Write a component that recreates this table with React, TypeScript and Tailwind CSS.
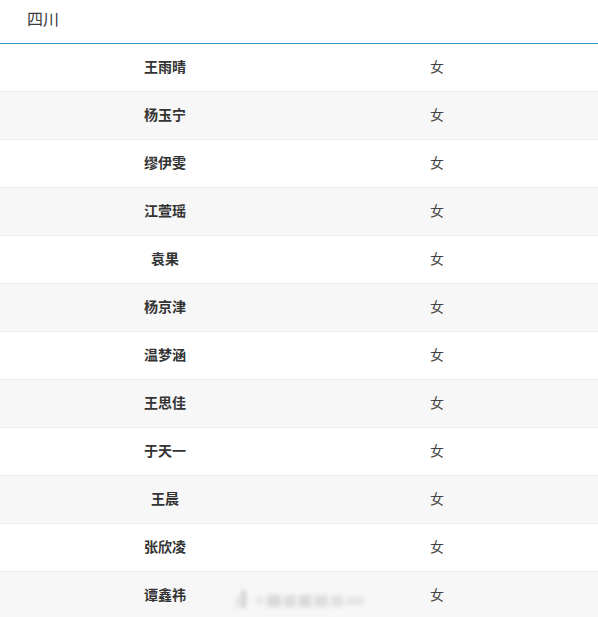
const NAMES = [
  "王雨晴",
  "杨玉宁",
  "缪伊雯",
  "江萱瑶",
  "袁果",
  "杨京津",
  "温梦涵",
  "王思佳",
  "于天一",
  "王晨",
  "张欣凌",
  "谭鑫祎",
];

export default function App() {
  return (
    <div
      className="relative w-[598px] h-[617px] overflow-hidden bg-white text-[#333]"
      style={{ fontFamily: '"Microsoft YaHei", "Noto Sans CJK SC", sans-serif' }}
    >
      <div className="h-[43px] pl-[27px] pt-[6px]">
        <span className="text-[16px] leading-[22px] text-[#3a3a3a]">四川</span>
      </div>
      <div className="h-[1px] w-full bg-[#34a0cc]" />
      {NAMES.map((name, i) => (
        <div
          key={name}
          className={`grid grid-cols-[330px_214px_1fr] h-[48px] pb-[2px] items-center border-b border-[#efefef] ${
            i % 2 === 1 ? "bg-[#f7f7f7]" : "bg-white"
          }`}
        >
          <span className="text-center text-[14px] font-bold text-[#333]">{name}</span>
          <span className="text-center text-[14px] text-[#444]">女</span>
          <span />
        </div>
      ))}
      <div className="absolute left-[236px] top-[588px] flex items-end gap-[10px] blur-[2px] opacity-75">
        <div className="flex items-end gap-[2px] h-[20px]">
          <div className="w-[3px] h-[12px] bg-[#d8d8d8]" />
          <div className="w-[5px] h-[18px] bg-[#c4c4c4] rounded-sm" />
        </div>
        <div className="flex gap-[3px] h-[14px] items-center">
          <div className="w-[8px] h-[8px] bg-[#e2e2e2]" />
          <div className="w-[14px] h-[12px] bg-[#d0d0d0]" />
          <div className="w-[12px] h-[12px] bg-[#d4d4d4]" />
          <div className="w-[12px] h-[12px] bg-[#cfcfcf]" />
          <div className="w-[14px] h-[12px] bg-[#d6d6d6]" />
          <div className="w-[12px] h-[12px] bg-[#dadada]" />
          <div className="w-[18px] h-[8px] bg-[#dedede]" />
        </div>
      </div>
    </div>
  );
}
